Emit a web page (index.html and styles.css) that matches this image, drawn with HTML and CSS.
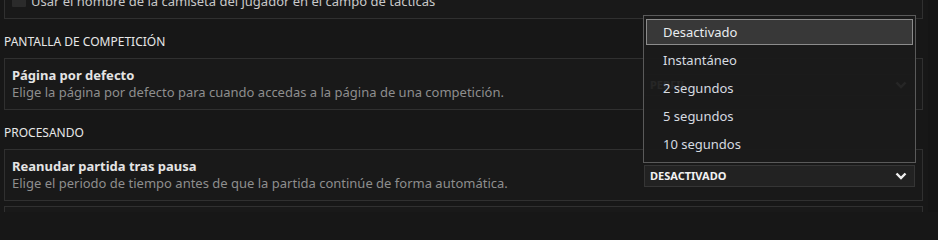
FILE: index.html
```html
<!DOCTYPE html>
<html lang="es">
<head>
<meta charset="utf-8">
<link rel="stylesheet" href="styles.css">
</head>
<body>
<div class="page">
  <div class="content">
    <div class="card card-partial">
      <label class="check-row"><span class="checkbox"></span><span class="check-label">Usar el nombre de la camiseta del jugador en el campo de tácticas</span></label>
    </div>

    <div class="section-title">PANTALLA DE COMPETICIÓN</div>
    <div class="card">
      <div class="info">
        <div class="title">Página por defecto</div>
        <div class="desc">Elige la página por defecto para cuando accedas a la página de una competición.</div>
      </div>
      <div class="select-wrap">
        <div class="select"><span class="select-value">PERFIL</span>
          <svg class="chev" width="12" height="8" viewBox="0 0 12 8"><path d="M1.5 1.5 L6 6 L10.5 1.5" fill="none" stroke="currentColor" stroke-width="2.4"/></svg>
        </div>
        <div class="menu">
          <div class="menu-item active">Desactivado</div>
          <div class="menu-item">Instantáneo</div>
          <div class="menu-item">2 segundos</div>
          <div class="menu-item">5 segundos</div>
          <div class="menu-item">10 segundos</div>
        </div>
      </div>
    </div>

    <div class="section-title">PROCESANDO</div>
    <div class="card">
      <div class="info">
        <div class="title">Reanudar partida tras pausa</div>
        <div class="desc">Elige el periodo de tiempo antes de que la partida continúe de forma automática.</div>
      </div>
      <div class="select-wrap">
        <div class="select"><span class="select-value">DESACTIVADO</span>
          <svg class="chev" width="12" height="8" viewBox="0 0 12 8"><path d="M1.5 1.5 L6 6 L10.5 1.5" fill="none" stroke="currentColor" stroke-width="2.4"/></svg>
        </div>
      </div>
    </div>
    <div class="card card-next"></div>
  </div>
  <div class="scrolltrack"></div>
</div>
</body>
</html>
```

FILE: styles.css
```css
* { box-sizing: border-box; }
html, body { margin: 0; padding: 0; }
body {
  background: #171717;
  font-family: "Noto Sans", "Open Sans", sans-serif;
  color: #e6e6e6;
  width: 938px;
  height: 212px;
  overflow: hidden;
}
.page {
  display: flex;
  height: 212px;
}
.content {
  flex: 1;
  padding: 0 5px 0 4px;
  display: flex;
  flex-direction: column;
}
.scrolltrack {
  width: 10px;
  background: #151515;
}
.card {
  border: 1px solid #303030;
  background: #191919;
  display: flex;
  align-items: center;
  padding: 7px 7px 8px 7px;
  height: 52px;
  flex-shrink: 0;
}
.card + .card { margin-top: 5px; }
.card-partial {
  margin-top: -17px;
  height: 36px;
  padding: 8px 7px;
}
.check-row {
  display: flex;
  align-items: center;
  gap: 5px;
  line-height: 18px;
  font-size: 13px;
  color: #c9c9c9;
}
.checkbox {
  width: 14px;
  height: 14px;
  background: #2b2b2b;
  border-radius: 1px;
  margin-top: -3px;
}
.section-title {
  margin-top: 15px;
  margin-bottom: 8px;
  font-size: 12px;
  line-height: 16px;
  color: #e8e8e8;
}
.info {
  flex: 1;
  min-width: 0;
}
.title {
  font-size: 13px;
  font-weight: 700;
  line-height: 18px;
  color: #e4e4e4;
}
.desc {
  font-size: 13px;
  line-height: 17px;
  color: #8e8e8e;
  white-space: nowrap;
}
.select-wrap {
  position: relative;
  width: 271px;
  flex-shrink: 0;
  margin-top: 2px;
}
.select {
  height: 22px;
  border: 1px solid #353535;
  background: #222222;
  display: flex;
  align-items: center;
  justify-content: space-between;
  padding: 0 7px 0 5px;
  color: #f2f2f2;
}
.select-value {
  font-size: 11px;
  font-weight: 700;
}
.chev { color: #f0f0f0; }
.menu {
  position: absolute;
  left: -1px;
  top: -59px;
  width: 273px;
  border: 1px solid #5a5a5a;
  background: rgba(26, 26, 26, 0.95);
  padding: 3px 2px 5px 2px;
  z-index: 5;
}
.menu-item {
  height: 26px;
  line-height: 24px;
  border: 1px solid transparent;
  padding-left: 16px;
  font-size: 13px;
  color: #d6dbe0;
}
.menu-item + .menu-item { margin-top: 2px; }
.menu-item.active {
  background: #383838;
  border-color: #8c8c8c;
  color: #e8ecef;
}
.card-next {
  height: 30px;
}
```
